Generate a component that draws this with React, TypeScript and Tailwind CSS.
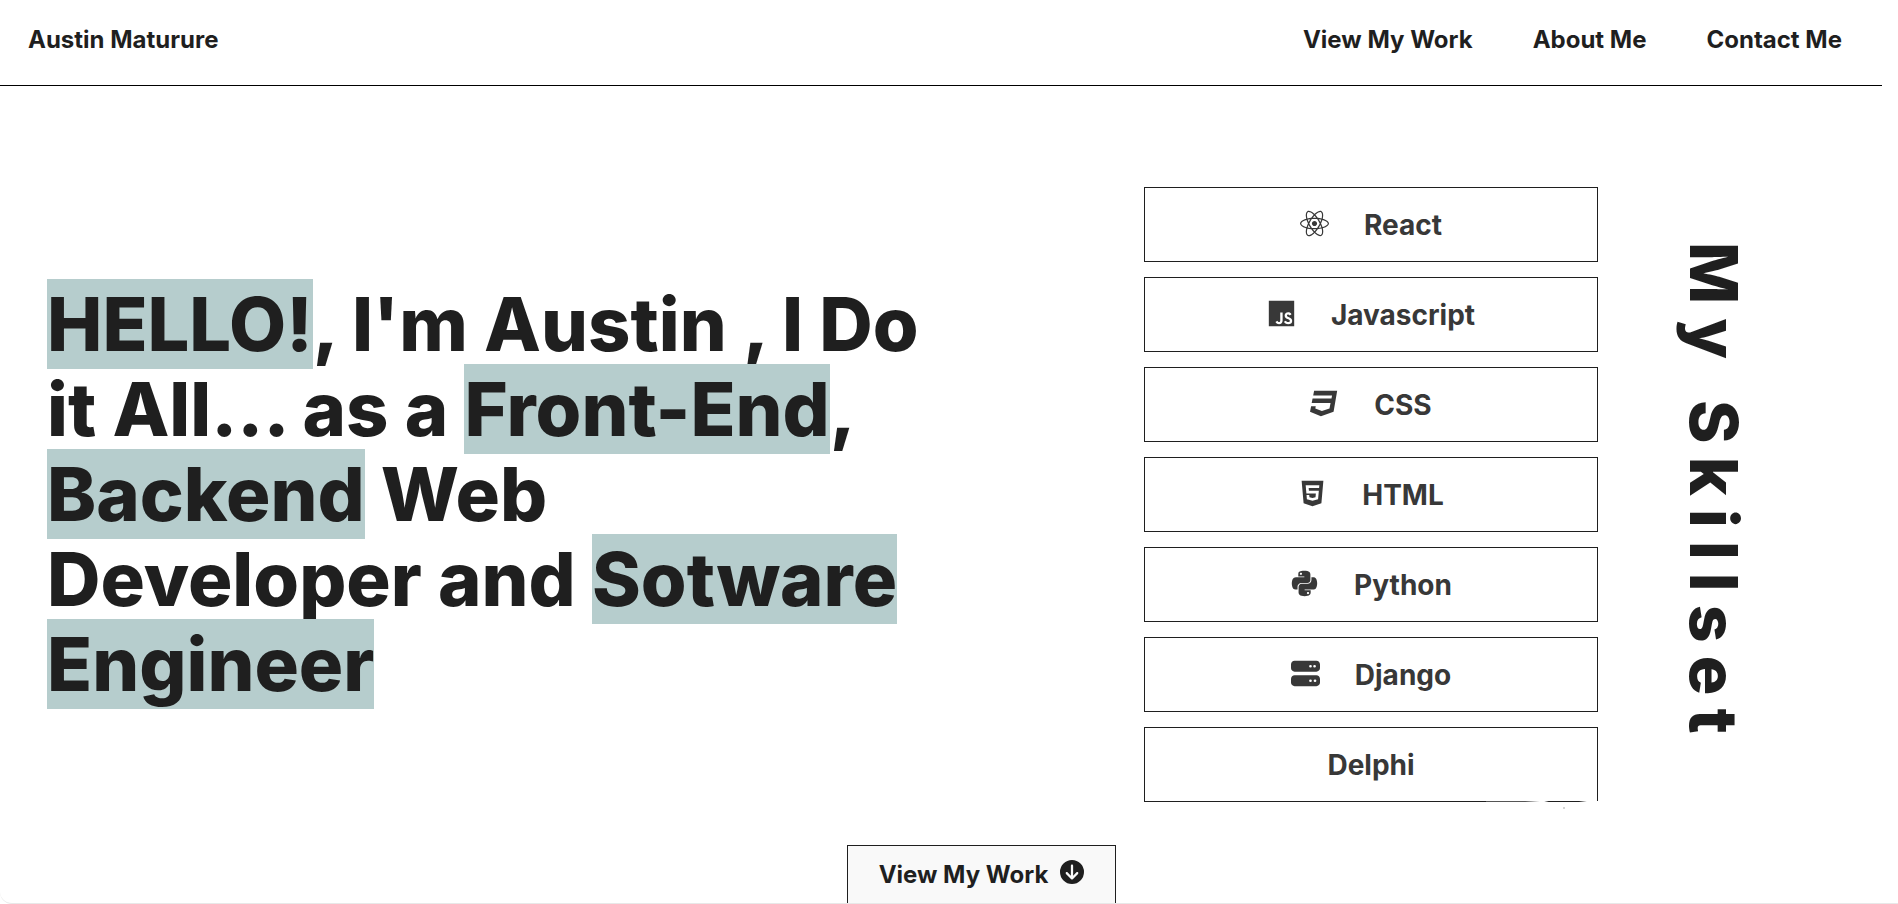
import type { IconType } from "react-icons";
import {
  FaCircleArrowDown,
  FaCss3,
  FaHtml5,
  FaJs,
  FaPython,
  FaReact,
  FaServer,
} from "react-icons/fa6";

const links = ["View My Work", "About Me", "Contact Me"];

const skills: { name: string; Icon?: IconType }[] = [
  { name: "React", Icon: FaReact },
  { name: "Javascript", Icon: FaJs },
  { name: "CSS", Icon: FaCss3 },
  { name: "HTML", Icon: FaHtml5 },
  { name: "Python", Icon: FaPython },
  { name: "Django", Icon: FaServer },
  { name: "Delphi" },
];

function Mark({ children }: { children: string }) {
  return <mark className="bg-[#b6cdcd] text-inherit">{children}</mark>;
}

/* Light glint that washes out the lower right edge of the last card. */
function Glint() {
  return (
    <>
      <span className="absolute -right-px -bottom-px h-px w-28 bg-[linear-gradient(to_right,#555_0%,#555_35%,#fff_48%,#fff_52%,#1f1f1f_56%,#1f1f1f_83%,#fff_90%)]" />
      <span className="absolute right-8 -bottom-2 size-0.5 bg-neutral-300" />
    </>
  );
}

export default function App() {
  return (
    <div className="flex min-h-screen flex-col overflow-hidden rounded-bl-xl border-b border-[#e8e8e8] bg-white pr-4 font-['Inter',sans-serif] text-[#1f1f1f]">
      <header className="flex h-[86px] items-start justify-between border-b border-black pt-6 pr-10 pl-7 text-2xl leading-8 font-bold">
        <a href="#home">Austin Maturure</a>
        <nav className="flex gap-15">
          {links.map((link) => (
            <a key={link} href="#">
              {link}
            </a>
          ))}
        </nav>
      </header>

      <main className="flex flex-1 items-start pt-[101px] pl-[47px]">
        <h1 className="mt-[95px] flex-1 text-[74px] leading-[85px] font-extrabold whitespace-nowrap">
          <Mark>HELLO!</Mark>, I'm Austin , I Do
          <br />
          it All... as a <Mark>Front-End</Mark>,
          <br />
          <Mark>Backend</Mark> Web
          <br />
          Developer and <Mark>Sotware</Mark>
          <br />
          <Mark>Engineer</Mark>
        </h1>

        <section className="flex items-center">
          <ul className="flex w-[454px] flex-col gap-[15px]">
            {skills.map(({ name, Icon }) => (
              <li
                key={name}
                className="relative flex h-[75px] items-center justify-center gap-[35px] border border-[#1f1f1f] text-[28px] font-bold text-[#383838]"
              >
                {Icon && <Icon className="mb-0.5 h-[29px] w-auto" />}
                {name}
                {name === "Delphi" && <Glint />}
              </li>
            ))}
          </ul>
          <h2 className="mr-32 ml-19 text-[66px] leading-[80px] font-extrabold tracking-[0.2em] [writing-mode:vertical-rl]">
            My Skillset
          </h2>
        </section>
      </main>

      <a
        href="#work"
        className="ml-[847px] flex h-[58px] w-[269px] items-center justify-center gap-3 border border-b-0 border-[#1f1f1f] bg-[#f9f9f9] text-2xl font-bold"
      >
        View My Work
        <FaCircleArrowDown className="mb-1.5 size-6" />
      </a>
    </div>
  );
}
